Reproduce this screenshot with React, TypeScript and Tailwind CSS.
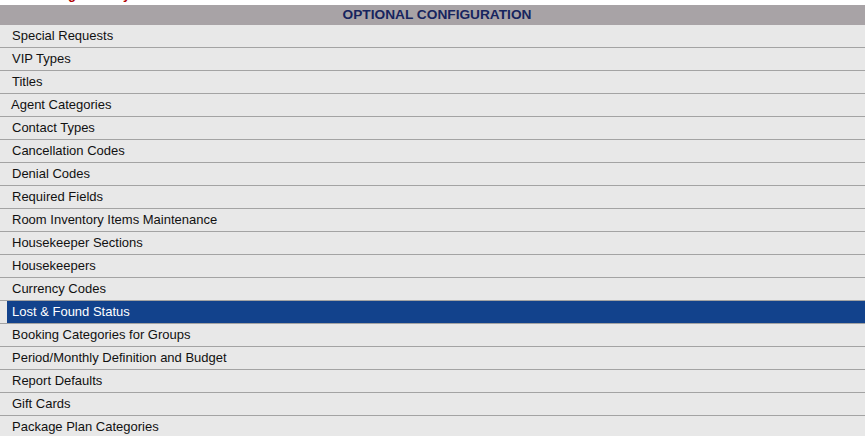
import React from "react";

const items = [
  "Special Requests",
  "VIP Types",
  "Titles",
  "Agent Categories",
  "Contact Types",
  "Cancellation Codes",
  "Denial Codes",
  "Required Fields",
  "Room Inventory Items Maintenance",
  "Housekeeper Sections",
  "Housekeepers",
  "Currency Codes",
  "Lost & Found Status",
  "Booking Categories for Groups",
  "Period/Monthly Definition and Budget",
  "Report Defaults",
  "Gift Cards",
  "Package Plan Categories",
];

export default function App() {
  return (
    <div
      className="w-[865px] h-[436px] overflow-hidden bg-white"
      style={{ fontFamily: '"Liberation Sans", Arial, sans-serif' }}
    >
      <div className="h-[5px] overflow-hidden">
        <div className="mt-[-13px] pl-[32px] leading-[15px] text-[13px] font-bold text-[#b00000]">
          Setting Delivery
        </div>
      </div>
      <div className="h-[20px] bg-[#a8a3a6] flex items-center justify-center pl-[9px]">
        <span className="text-[13.7px] font-bold text-[#16245e] leading-none">
          OPTIONAL CONFIGURATION
        </span>
      </div>
      <div className="flex flex-col">
        {items.map((t) => {
          const sel = t === "Lost & Found Status";
          return (
            <div
              key={t}
              className="h-[23px] bg-[#e8e8e8] border-b border-[#a3a3a3] pl-[7px]"
            >
              <div
                className={
                  sel
                    ? "h-[22px] bg-[#12428c] text-white pl-[5px] text-[13px] leading-[22px]"
                    : "h-[22px] text-[#111] pl-[5px] text-[13px] leading-[22px]"
                }
                style={t === "Agent Categories" ? { paddingLeft: 4 } : undefined}
              >
                {t}
              </div>
            </div>
          );
        })}
      </div>
    </div>
  );
}
